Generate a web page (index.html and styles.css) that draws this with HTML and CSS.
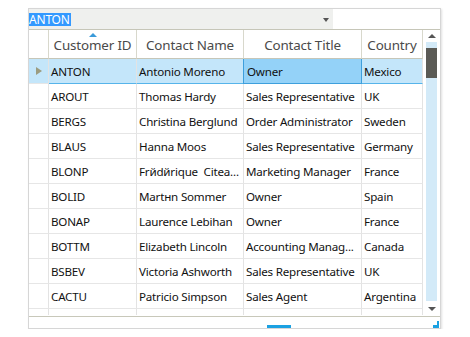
FILE: index.html
```html
<!DOCTYPE html>
<html>
<head>
<meta charset="utf-8">
<link rel="stylesheet" href="styles.css">
</head>
<body>
<div class="frame">
  <div class="combo">
    <div class="combo-box"><span class="sel">ANTON</span><span class="caret"></span></div>
  </div>
  <div class="main">
    <div class="grid">
      <div class="row head">
        <div class="c rh"></div>
        <div class="c sorted"><span class="sort"></span>Customer ID</div>
        <div class="c">Contact Name</div>
        <div class="c">Contact Title</div>
        <div class="c">Country</div>
      </div>
      <div class="row selected">
        <div class="c rh"><span class="cur"></span></div>
        <div class="c">ANTON</div>
        <div class="c">Antonio Moreno</div>
        <div class="c current">Owner</div>
        <div class="c">Mexico</div>
      </div>
      <div class="row"><div class="c rh"></div><div class="c">AROUT</div><div class="c">Thomas Hardy</div><div class="c">Sales Representative</div><div class="c">UK</div></div>
      <div class="row"><div class="c rh"></div><div class="c">BERGS</div><div class="c">Christina Berglund</div><div class="c">Order Administrator</div><div class="c">Sweden</div></div>
      <div class="row"><div class="c rh"></div><div class="c">BLAUS</div><div class="c">Hanna Moos</div><div class="c">Sales Representative</div><div class="c">Germany</div></div>
      <div class="row"><div class="c rh"></div><div class="c">BLONP</div><div class="c">Frйdйrique&nbsp; Citea...</div><div class="c">Marketing Manager</div><div class="c">France</div></div>
      <div class="row"><div class="c rh"></div><div class="c">BOLID</div><div class="c">Martнn Sommer</div><div class="c">Owner</div><div class="c">Spain</div></div>
      <div class="row"><div class="c rh"></div><div class="c">BONAP</div><div class="c">Laurence Lebihan</div><div class="c">Owner</div><div class="c">France</div></div>
      <div class="row"><div class="c rh"></div><div class="c">BOTTM</div><div class="c">Elizabeth Lincoln</div><div class="c">Accounting Manag...</div><div class="c">Canada</div></div>
      <div class="row"><div class="c rh"></div><div class="c">BSBEV</div><div class="c">Victoria Ashworth</div><div class="c">Sales Representative</div><div class="c">UK</div></div>
      <div class="row"><div class="c rh"></div><div class="c">CACTU</div><div class="c">Patricio Simpson</div><div class="c">Sales Agent</div><div class="c">Argentina</div></div>
      <div class="row partial"><div class="c rh"></div><div class="c"></div><div class="c"></div><div class="c"></div><div class="c"></div></div>
    </div>
    <div class="vscroll">
      <span class="arrow up"></span>
      <div class="track"><div class="gap"></div><div class="thumb"></div></div>
      <span class="arrow down"></span>
    </div>
  </div>
  <div class="hbar">
    <div class="hthumb"></div>
    <div class="corner"></div>
  </div>
</div>
</body>
</html>
```
FILE: styles.css
```css
* { box-sizing: border-box; }
html, body { margin: 0; padding: 0; background: #fff; }
body { font-family: "Noto Sans", "Open Sans", sans-serif; }

.frame {
  margin: 8px 0 0 28px;
  width: 413px;
  height: 321px;
  border: 1px solid #d6d6d6;
  box-shadow: 1px 1px 2px rgba(0,0,0,0.12);
  display: flex;
  flex-direction: column;
}

.combo {
  height: 21px;
  display: flex;
  border-bottom: 1px solid #c6c6b8;
}
.combo-box {
  width: 304px;
  background: #eff0ee;
  display: flex;
  align-items: center;
  justify-content: space-between;
  padding-right: 4px;
}
.sel {
  background: #3399ff;
  color: #fff;
  font-size: 12px;
  line-height: 13px;
  letter-spacing: -0.2px;
  padding: 0 1px 0 0;
}
.caret {
  width: 0; height: 0;
  border-left: 3px solid transparent;
  border-right: 3px solid transparent;
  border-top: 4px solid #555;
  margin-top: 2px;
}

.main {
  display: flex;
  height: 286px;
}
.grid {
  width: 394px;
  overflow: hidden;
}
.row {
  display: grid;
  grid-template-columns: 20px 88px 107px 118px 61px;
  height: 25px;
}
.c {
  border-right: 1px solid #e3e3e3;
  border-bottom: 1px solid #e6e6e6;
  font-size: 11.6px;
  letter-spacing: -0.2px;
  color: #111;
  padding-left: 2px;
  display: flex;
  align-items: center;
  white-space: nowrap;
  overflow: hidden;
}
.c.rh { padding: 0; justify-content: center; }

.head { height: 29px; }
.head .c {
  border-right-color: #d8d8cc;
  border-bottom-color: #c6c6b8;
  font-size: 13.4px;
  letter-spacing: -0.15px;
  color: #4a4a4a;
  justify-content: center;
  padding: 1px 0 0 0;
  position: relative;
}
.sort {
  position: absolute;
  top: 3px;
  left: 50%;
  margin-left: -4px;
  width: 0; height: 0;
  border-left: 4px solid transparent;
  border-right: 4px solid transparent;
  border-bottom: 4px solid #3a9ad9;
}

.selected .c { background: #c4e6fa; border-bottom-color: #56b4ea; }
.selected .c.rh { border-bottom-color: #e6e6e6; }
.selected .c.current {
  background: #94d2f8;
  border: 1px solid #3e9fdc;
  border-top: none;
  margin-left: -1px;
  padding-left: 3px;
}
.cur {
  width: 0; height: 0;
  border-top: 4px solid transparent;
  border-bottom: 4px solid transparent;
  border-left: 6px solid #9c9c80;
  margin-left: 1px;
}
.partial { height: 6px; }
.partial .c { border-bottom: none; }

.vscroll {
  width: 17px;
  display: flex;
  flex-direction: column;
  align-items: center;
  padding-top: 4px;
}
.arrow {
  width: 0; height: 0;
  border-left: 4px solid transparent;
  border-right: 4px solid transparent;
}
.arrow.up { border-bottom: 4px solid #555; }
.arrow.down { border-top: 4px solid #555; margin-top: 6px; }
.track {
  margin-top: 4px;
  width: 11px;
  height: 259px;
  background: #d3eaf8;
  display: flex;
  flex-direction: column;
}
.gap { height: 6px; }
.thumb { height: 30px; background: #5a5a55; }

.hbar {
  border-top: 1px solid #c8c8ba;
  height: 12px;
  display: flex;
  align-items: flex-end;
}
.hthumb {
  width: 24px;
  height: 3px;
  background: #1ba1e2;
  margin-left: 238px;
}
.corner {
  margin-left: auto;
  margin-right: 1px;
  width: 6px;
  height: 7px;
  border-right: 2px solid #1ba1e2;
  border-bottom: 3px solid #1ba1e2;
}
```
